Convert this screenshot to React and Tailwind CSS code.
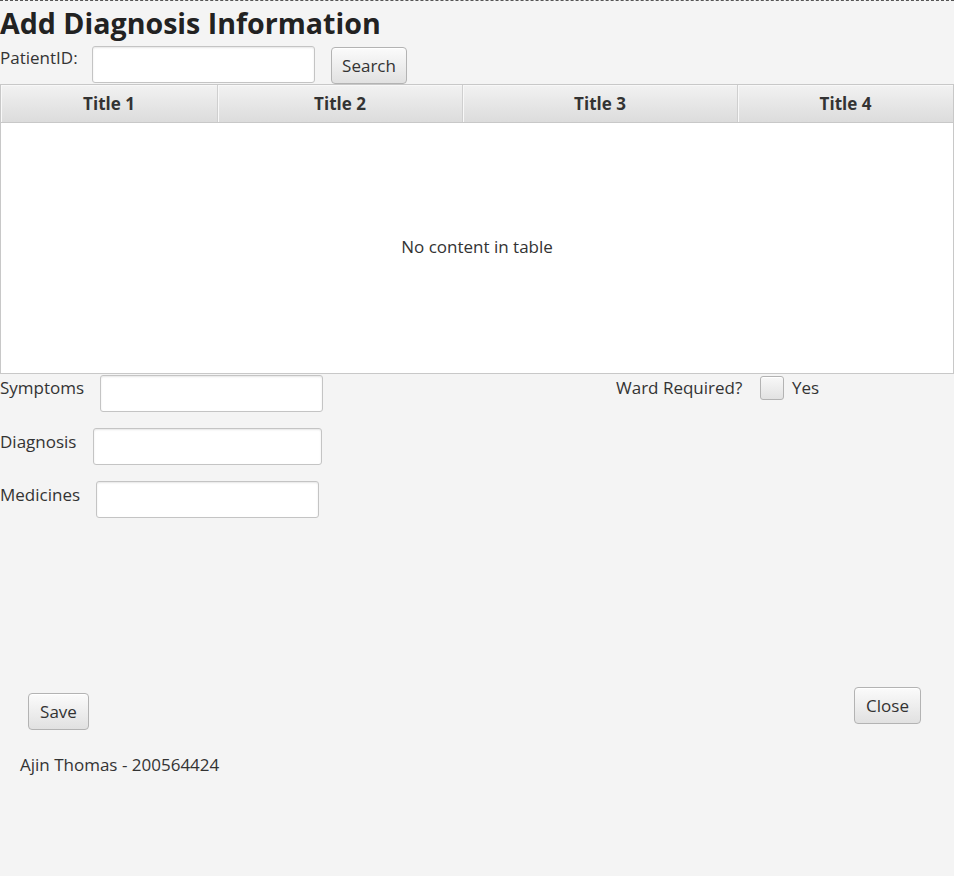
import React from "react";

const inputCls =
  "h-[37px] bg-white border border-[#c4c4c4] rounded-[3px] shadow-[inset_0_1px_2px_rgba(0,0,0,0.10)]";
const btnCls =
  "h-[37px] bg-linear-to-b from-[#fbfbfb] to-[#e1e1e1] border border-[#b3b3b3] rounded-[4px] shadow-[inset_0_1px_0_#ffffff] text-[17px] text-[#333] flex items-center justify-center";

export default function App() {
  return (
    <div
      className="w-[954px] h-[876px] bg-[#f4f4f4] border-t border-dashed border-[#555] text-[#333] overflow-hidden"
      style={{ fontFamily: '"Open Sans", "Noto Sans", sans-serif' }}
    >
      <div className="h-[44px] flex items-center">
        <h1 className="text-[28.6px] font-bold leading-none text-[#222] mt-[1px]">Add Diagnosis Information</h1>
      </div>
      <div className="h-[39px] flex items-start">
        <div className="w-[92px] text-[17px] leading-[21px] mt-[2px]">PatientID:</div>
        <div className={inputCls + " w-[223px] mt-[1px]"} />
        <button className={btnCls + " w-[76px] ml-[16px] mt-[2px] h-[36px]"}>Search</button>
      </div>
      <div className="w-[954px] h-[290px] border border-[#c8c8c8] bg-white flex flex-col">
        <div className="h-[38px] flex bg-linear-to-b from-[#f2f2f2] to-[#dcdcdc] border-b border-[#c8c8c8]">
          {[
            ["Title 1", "w-[217px]"],
            ["Title 2", "w-[245px]"],
            ["Title 3", "w-[275px]"],
            ["Title 4", "flex-1"],
          ].map(([t, w], i) => (
            <div
              key={t}
              className={
                w +
                " flex items-center justify-center text-[17px] font-bold text-[#333] shadow-[inset_1px_1px_0_#f8f8f8] " +
                (i < 3 ? "border-r border-[#cfcfcf]" : "")
              }
            >
              {t}
            </div>
          ))}
        </div>
        <div className="flex-1 flex items-center justify-center text-[17px] text-[#333] pb-[2px]">
          No content in table
        </div>
      </div>

      <div className="flex">
        <div className="w-[616px] flex flex-col">
          <div className="flex items-start mt-[1px]">
            <div className="w-[100px] text-[17px] leading-[21px] mt-[2px]">Symptoms</div>
            <div className={inputCls + " w-[223px]"} />
          </div>
          <div className="flex items-start mt-[16px]">
            <div className="w-[93px] text-[17px] leading-[21px] mt-[3px]">Diagnosis</div>
            <div className={inputCls + " w-[229px]"} />
          </div>
          <div className="flex items-start mt-[16px]">
            <div className="w-[96px] text-[17px] leading-[21px] mt-[3px]">Medicines</div>
            <div className={inputCls + " w-[223px]"} />
          </div>
        </div>
        <div className="flex items-start mt-[3px]">
          <div className="w-[144px] text-[17px] leading-[21px]">Ward Required?</div>
          <div className="w-[24px] h-[24px] mt-[-1px] rounded-[3px] border border-[#b3b3b3] bg-linear-to-b from-[#f8f8f8] to-[#e2e2e2] shadow-[inset_0_1px_0_#fff]" />
          <div className="ml-[8px] text-[17px] leading-[21px]">Yes</div>
        </div>
      </div>

      <div className="flex items-start justify-between mt-[169px] pl-[28px] pr-[33px]">
        <button className={btnCls + " w-[61px] mt-[6px]"}>Save</button>
        <button className={btnCls + " w-[67px]"}>Close</button>
      </div>
      <div className="pl-[20px] mt-[24px] text-[17px] leading-[21px]">Ajin Thomas - 200564424</div>
    </div>
  );
}
